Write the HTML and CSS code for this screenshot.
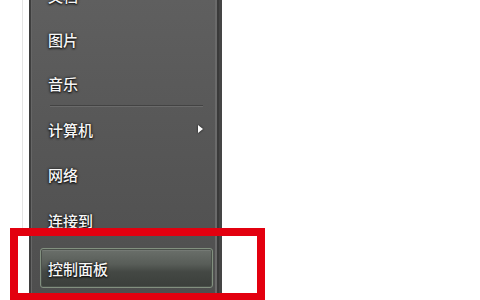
FILE: index.html
```html
<!DOCTYPE html>
<html lang="zh">
<head>
<meta charset="utf-8">
<link rel="stylesheet" href="styles.css">
</head>
<body>
<div class="page">
  <div class="shadow-line"></div>
  <div class="panel">
    <div class="item first"><span class="label">文档</span></div>
    <div class="item"><span class="label">图片</span></div>
    <div class="item"><span class="label">音乐</span></div>
    <div class="sep"></div>
    <div class="item"><span class="label">计算机</span><span class="arrow"></span></div>
    <div class="item tall"><span class="label">网络</span></div>
    <div class="item"><span class="label">连接到</span></div>
    <div class="item hl"><span class="label">控制面板</span></div>
  </div>
</div>
<div class="redbox"></div>
</body>
</html>
```
FILE: styles.css
```css
html, body {
  margin: 0;
  padding: 0;
  background: #ffffff;
  width: 480px;
  height: 300px;
  overflow: hidden;
}
.page {
  display: flex;
  height: 300px;
  padding-left: 22px;
}
.shadow-line {
  width: 1px;
  height: 228px;
  background: #e4e4e4;
  margin-right: 6px;
}
.panel {
  width: 193px;
  height: 300px;
  box-sizing: border-box;
  padding: 0 9px 0 11px;
  background: linear-gradient(to bottom, #5f5f5f 0%, #575757 45%, #4e4e4e 100%);
  box-shadow: inset 2px 0 0 #3e3e3e, inset 3px 0 0 #666666,
              inset -3px 0 0 #454545, inset -5px 0 0 #3a3a3a, inset -7px 0 0 #6a6a6a;
  display: flex;
  flex-direction: column;
  font-family: "Noto Sans CJK SC", "Noto Sans", sans-serif;
  font-size: 15px;
  font-weight: 500;
  color: #f6f6f6;
}
.item {
  height: 44px;
  flex: none;
  display: flex;
  align-items: center;
  justify-content: space-between;
  padding: 0 10px 0 8px;
  box-sizing: border-box;
}
.item.first {
  margin-top: -27px;
}
.item.tall {
  height: 47px;
}
.label {
  line-height: 1;
  text-shadow: 0 0 3px rgba(0,0,0,0.95), 0 1px 2px rgba(0,0,0,0.8);
}
.sep {
  height: 2px;
  flex: none;
  margin: 0 10px;
  background: linear-gradient(to bottom, #434343 50%, #6a6a6a 50%);
}
.arrow {
  width: 0;
  height: 0;
  border-top: 4px solid transparent;
  border-bottom: 4px solid transparent;
  border-left: 5px solid #ffffff;
  filter: drop-shadow(0 0 1px rgba(0,0,0,0.8));
}
.item.hl {
  height: 40px;
  margin-top: 6px;
  border: 1px solid #82907f;
  border-radius: 3px;
  padding-left: 7px;
  background: linear-gradient(to bottom, #6b706b 0%, #585d58 40%, #444844 60%, #3b3f3b 100%);
  box-shadow: inset 0 0 0 1px #4a504a, inset 0 1px 0 1px rgba(255,255,255,0.08);
}
.redbox {
  position: absolute;
  left: 10px;
  top: 228px;
  width: 255px;
  height: 73px;
  box-sizing: border-box;
  border: 8px solid #e3000f;
}
```
